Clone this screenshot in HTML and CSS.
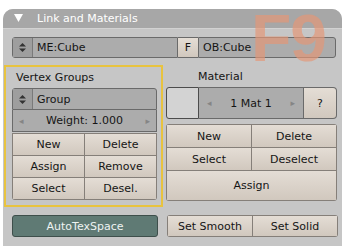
FILE: index.html
```html
<!DOCTYPE html>
<html lang="en">

<head>
    <meta charset="UTF-8">
    <title>Link and Materials</title>
    <link rel="stylesheet" href="styles.css">
</head>

<body>
    <div class="panel">
        <div class="header">
            <svg class="tri" width="9" height="8" viewBox="0 0 9 8">
                <polygon points="0,0 9,0 4.5,8" fill="#fff" />
            </svg>
            <span>Link and Materials</span>
        </div>

        <div class="row-top">
            <div class="field me">
                <span class="spin">
                    <svg width="7" height="9" viewBox="0 0 7 9">
                        <polygon points="0,3.5 7,3.5 3.5,0" fill="#333" />
                        <polygon points="0,5.5 7,5.5 3.5,9" fill="#333" />
                    </svg>
                </span>
                <span class="field-text">ME:Cube</span>
            </div>
            <div class="btn f">F</div>
            <div class="field ob"><span class="field-text">OB:Cube</span></div>
        </div>

        <div class="columns">
            <div class="vgroups">
                <div class="label">Vertex Groups</div>
                <div class="field group">
                    <span class="spin">
                        <svg width="7" height="9" viewBox="0 0 7 9">
                            <polygon points="0,3.5 7,3.5 3.5,0" fill="#333" />
                            <polygon points="0,5.5 7,5.5 3.5,9" fill="#333" />
                        </svg>
                    </span>
                    <span class="field-text">Group</span>
                </div>
                <div class="field num weight">
                    <span class="arrow">&#9666;</span>
                    <span>Weight: 1.000</span>
                    <span class="arrow">&#9656;</span>
                </div>
                <div class="btn-grid left-grid">
                    <div class="btn">New</div>
                    <div class="btn">Delete</div>
                    <div class="btn">Assign</div>
                    <div class="btn">Remove</div>
                    <div class="btn">Select</div>
                    <div class="btn">Desel.</div>
                </div>
            </div>

            <div class="material">
                <div class="label mat-label">Material</div>
                <div class="mat-row">
                    <div class="swatch"></div>
                    <div class="field num mat">
                        <span class="arrow">&#9666;</span>
                        <span>1 Mat 1</span>
                        <span class="arrow">&#9656;</span>
                    </div>
                    <div class="btn q">?</div>
                </div>
                <div class="btn-grid right-grid">
                    <div class="btn">New</div>
                    <div class="btn">Delete</div>
                    <div class="btn">Select</div>
                    <div class="btn">Deselect</div>
                    <div class="btn wide">Assign</div>
                </div>
            </div>
        </div>

        <div class="row-bottom">
            <div class="btn toggle">AutoTexSpace</div>
            <div class="btn-grid pair">
                <div class="btn">Set Smooth</div>
                <div class="btn">Set Solid</div>
            </div>
        </div>

        <div class="f9">F9</div>
    </div>
</body>

</html>
```

FILE: styles.css
```css
* {
    box-sizing: border-box;
}

body {
    margin: 0;
    padding: 0;
    background-color: #fff;
    font-family: "DejaVu Sans", sans-serif;
    font-size: 11px;
    color: #151515;
}

.panel {
    position: relative;
    margin: 9px 0 0 3px;
    width: 339px;
    height: 237px;
    background-color: #c6c6c6;
    border-radius: 10px 10px 0 0;
}

.header {
    display: flex;
    align-items: center;
    height: 20px;
    padding-left: 11px;
    background-color: #a7a7a7;
    border-bottom: 1px solid #d2d2d2;
    border-radius: 10px 10px 0 0;
    color: #fff;
    font-size: 11px;
}

.tri {
    margin-right: 14px;
    margin-top: -1px;
}

.row-top {
    display: flex;
    height: 21px;
    margin: 8px 6px 0 9px;
}

.field {
    display: flex;
    align-items: center;
    background-color: #acacac;
    border: 1px solid #6a6a6a;
}

.field-text {
    padding-left: 4px;
}

.spin {
    display: flex;
    align-items: center;
    justify-content: center;
    width: 20px;
    height: 100%;
    background-color: #9e9e9e;
    border-right: 1px solid #7a7a7a;
}

.me {
    width: 166px;
    border-radius: 3px 0 0 3px;
}

.f {
    width: 20px;
    border: 1px solid #6a6a6a;
    border-left: none;
    border-right: none;
    background: #cdcac7;
}

.ob {
    width: 138px;
    border-radius: 0 3px 3px 0;
}

.columns {
    display: flex;
    margin-top: 7px;
}

.vgroups {
    width: 159px;
    height: 142px;
    margin-left: 1px;
    padding: 0 4px 0 6px;
    border: 2px solid #e8c33f;
}

.label {
    display: flex;
    align-items: center;
    height: 21px;
    padding-left: 4px;
}

.group {
    height: 22px;
    border-radius: 3px 3px 0 0;
}

.num {
    justify-content: space-between;
    padding: 0 6px;
}

.arrow {
    color: #858585;
    font-size: 9px;
}

.weight {
    height: 22px;
    border-top: none;
}

.btn {
    display: flex;
    align-items: center;
    justify-content: center;
    background: linear-gradient(#e4ddd5, #d1c8be);
}

.btn-grid {
    display: grid;
    grid-template-columns: 1fr 1fr;
    gap: 1px;
    padding: 1px;
    background-color: #857f79;
}

.left-grid {
    height: 67px;
    margin-top: 1px;
    grid-template-rows: repeat(3, 1fr);
    border-radius: 0 0 3px 3px;
}

.material {
    width: 171px;
    margin-left: 3px;
}

.mat-label {
    height: 22px;
    padding-left: 32px;
}

.mat-row {
    display: flex;
    height: 32px;
}

.swatch {
    width: 33px;
    background-color: #d3d3d3;
    border: 1px solid #4c4c4c;
    border-radius: 3px 0 0 3px;
}

.mat {
    width: 105px;
    border-left: none;
    padding: 0 8px;
}

.mat span:nth-child(2) {
    flex: 1;
    text-align: center;
}

.q {
    width: 33px;
    border: 1px solid #6a6a6a;
    border-left: none;
    border-radius: 0 4px 4px 0;
}

.right-grid {
    height: 77px;
    margin-top: 5px;
    grid-template-rows: 22px 22px 1fr;
    border-radius: 3px;
}

.wide {
    grid-column: span 2;
}

.row-bottom {
    display: flex;
    gap: 9px;
    height: 22px;
    margin: 8px 0 0 9px;
}

.toggle {
    width: 146px;
    background: #5f7a74;
    border: 1px solid #3e4f4b;
    border-radius: 3px;
    color: #eef3f2;
}

.pair {
    width: 171px;
    border-radius: 3px;
}

/* big shortcut hint drawn over the panel */
.f9 {
    position: absolute;
    top: -9px;
    left: 248px;
    font-family: "Liberation Sans", sans-serif;
    font-weight: bold;
    font-size: 66px;
    line-height: normal;
    letter-spacing: -1px;
    color: rgba(228, 150, 118, 0.68);
}
```
